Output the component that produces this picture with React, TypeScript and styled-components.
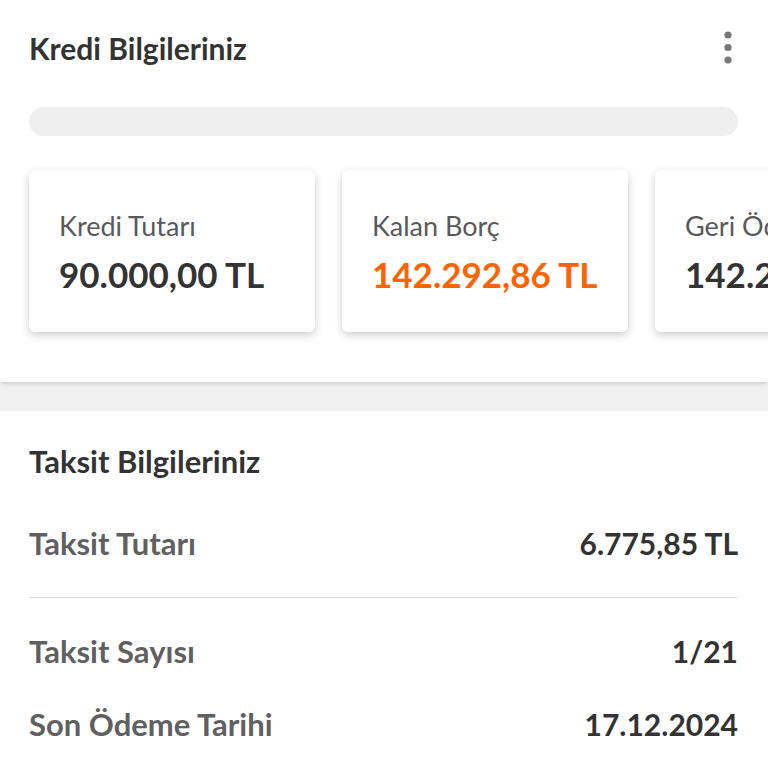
import React from 'react';
import styled, { createGlobalStyle } from 'styled-components';

const GlobalStyle = createGlobalStyle`
	html, body {
		margin: 0;
		padding: 0;
		background: #ffffff;
		font-family: Lato, "Noto Sans", sans-serif;
		color: #333333;
	}
	* {
		box-sizing: border-box;
	}
`;

interface SummaryItem {
	label: string;
	value: string;
	highlight?: boolean;
}

interface InstallmentItem {
	label: string;
	value: string;
	divider?: boolean;
}

const SUMMARY: SummaryItem[] = [
	{ label: 'Kredi Tutarı', value: '90.000,00 TL' },
	{ label: 'Kalan Borç', value: '142.292,86 TL', highlight: true },
	{ label: 'Geri Ödenecek Tutar', value: '142.292,86 TL' },
];

const INSTALLMENTS: InstallmentItem[] = [
	{ label: 'Taksit Tutarı', value: '6.775,85 TL', divider: true },
	{ label: 'Taksit Sayısı', value: '1/21' },
	{ label: 'Son Ödeme Tarihi', value: '17.12.2024' },
];

const App = (): React.ReactElement => (
	<>
		<GlobalStyle />
		<Page>
			<CreditSection>
				<Header>
					<Title>Kredi Bilgileriniz</Title>
					<MenuButton aria-label="menu">
						<svg width="10" height="34" viewBox="0 0 10 34">
							<circle cx="5" cy="4" r="3.6" fill="#777" />
							<circle cx="5" cy="16.5" r="3.6" fill="#777" />
							<circle cx="5" cy="29" r="3.6" fill="#777" />
						</svg>
					</MenuButton>
				</Header>
				<Skeleton />
				<CardTrack>
					{SUMMARY.map((item) => (
						<Card key={item.label}>
							<CardLabel>{item.label}</CardLabel>
							<CardValue highlight={item.highlight}>{item.value}</CardValue>
						</Card>
					))}
				</CardTrack>
			</CreditSection>
			<Gap />
			<InstallmentSection>
				<SectionTitle>Taksit Bilgileriniz</SectionTitle>
				<List>
					{INSTALLMENTS.map((item) => (
						<Row key={item.label} divider={item.divider}>
							<RowLabel>{item.label}</RowLabel>
							<RowValue>{item.value}</RowValue>
						</Row>
					))}
				</List>
			</InstallmentSection>
		</Page>
	</>
);

export default App;

const Page = styled.main`
	width: 768px;
	height: 768px;
	overflow: hidden;
	background: #f0f0f0;
	display: flex;
	flex-direction: column;
`;

const CreditSection = styled.section`
	flex-shrink: 0;
	background: #ffffff;
	padding: 0 0 40px 29px;
	box-shadow: 0 2px 4px rgba(0, 0, 0, 0.14);
	position: relative;
	z-index: 1;
`;

const Header = styled.div`
	height: 96px;
	display: flex;
	align-items: center;
	justify-content: space-between;
	padding-right: 35px;
`;

const Title = styled.h1`
	margin: 0;
	font-size: 30px;
	line-height: 36px;
	font-weight: 700;
	color: #333333;
`;

const MenuButton = styled.button`
	border: 0;
	background: none;
	padding: 0;
	display: flex;
	cursor: pointer;
`;

const Skeleton = styled.div`
	height: 29px;
	margin-top: 11px;
	margin-right: 30px;
	border-radius: 15px;
	background: #efefef;
`;

const CardTrack = styled.div`
	display: flex;
	gap: 27px;
	margin: 24px 0 0 -10px;
	padding: 10px;
	overflow: hidden;
`;

const Card = styled.div`
	flex: 0 0 286px;
	height: 162px;
	border-radius: 6px;
	background: #ffffff;
	box-shadow: 0 3px 8px rgba(0, 0, 0, 0.2);
	padding: 42px 0 0 30px;
	display: flex;
	flex-direction: column;
	gap: 14px;
	white-space: nowrap;
	overflow: hidden;
`;

const CardLabel = styled.span`
	font-size: 27px;
	line-height: 28px;
	color: #595959;
`;

const CardValue = styled.span<{ highlight?: boolean }>`
	font-size: 35px;
	line-height: 40px;
	font-weight: 700;
	color: ${({ highlight }): string => (highlight ? '#ff6200' : '#333333')};
`;

const Gap = styled.div`
	flex-shrink: 0;
	height: 29px;
`;

const InstallmentSection = styled.section`
	flex: 1 0 auto;
	background: #ffffff;
	padding: 34px 30px 0 29px;
`;

const SectionTitle = styled.h2`
	margin: 0;
	font-size: 31px;
	line-height: 32px;
	font-weight: 700;
	color: #333333;
`;

const List = styled.div`
	margin-top: 44px;
	display: flex;
	flex-direction: column;
`;

const Row = styled.div<{ divider?: boolean }>`
	display: flex;
	align-items: center;
	justify-content: space-between;
	height: ${({ divider }): string => (divider ? '77px' : '44px')};
	padding-bottom: ${({ divider }): string => (divider ? '33px' : '0')};
	margin-bottom: ${({ divider }): string => (divider ? '31px' : '29px')};
	border-bottom: ${({ divider }): string => (divider ? '1px solid #dcdcdc' : 'none')};
	line-height: 44px;
`;

const RowLabel = styled.span`
	font-size: 31px;
	font-weight: 700;
	color: #606060;
`;

const RowValue = styled.span`
	font-size: 30px;
	font-weight: 700;
	color: #333333;
`;
